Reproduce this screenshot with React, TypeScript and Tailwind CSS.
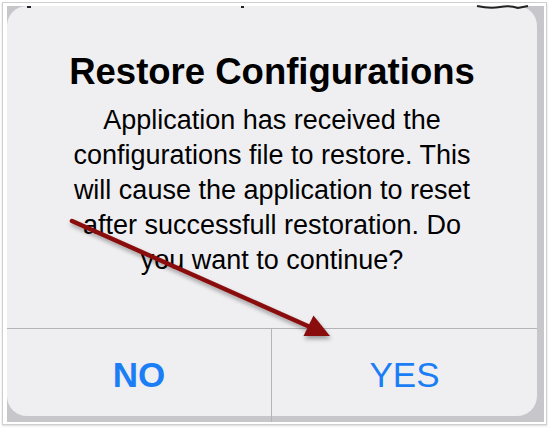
import React from "react";

const font = { fontFamily: '"Liberation Sans", Arial, Helvetica, sans-serif' };

const bodyLines = [
  "Application has received the",
  "configurations file to restore. This",
  "will cause the application to reset",
  "after successfull restoration. Do",
  "you want to continue?",
];

function Arrow() {
  return (
    <svg className="absolute inset-0 pointer-events-none" width={552} height={428} viewBox="0 0 552 428">
      <defs>
        <filter id="sh" x="-10%" y="-10%" width="120%" height="130%">
          <feDropShadow dx="1" dy="3" stdDeviation="2" floodColor="#000" floodOpacity="0.35" />
        </filter>
      </defs>
      {/* bits of the screen behind the alert */}
      <path d="M27 6 L31 6 L31 8 L27 8 Z" fill="#222" />
      <path d="M241 6 L244 6 L244 8 L241 8 Z" fill="#222" />
      <path d="M477 6 Q490 9 500 7 Q510 5 518 8 L528 6" stroke="#222" strokeWidth="2" fill="none" />
      <g filter="url(#sh)">
        <line x1="72" y1="221" x2="310" y2="327" stroke="#8a0b0b" strokeWidth="4.5" strokeLinecap="round" />
        <polygon points="330,336 303.5,336 313.5,315.5" fill="#8a0b0b" />
      </g>
    </svg>
  );
}

export default function App() {
  return (
    <div className="relative w-[552px] h-[428px] bg-white overflow-hidden" style={font}>
      <div className="ml-[2px] mt-[2px] w-[545px] h-[423px] border border-[#cfcfcf] pl-[4px] pt-[3px] pr-[2px] pb-[2px] shadow-[0_1px_2px_rgba(0,0,0,0.15)]">
        <div className="relative w-[537px] h-[416px] bg-[#c6c6cb] overflow-hidden">
          <div className="relative w-[530px] h-[410px] bg-[#efeff2] rounded-[20px] flex flex-col">
            <div className="h-[322px] flex flex-col items-center pt-[48px]">
              <h1 className="text-[36.5px] leading-[36px] font-bold text-black whitespace-nowrap">
                Restore Configurations
              </h1>
              <div className="mt-[13px] flex flex-col items-center text-[27px] leading-[35px] text-black">
                {bodyLines.map((l) => (
                  <p key={l} className="whitespace-nowrap">{l}</p>
                ))}
              </div>
            </div>
            <div className="h-px bg-[#b4b4b8]" />
            <div className="flex flex-1">
              <button className="w-[264px] flex items-center justify-center pt-[3px] text-[35px] leading-[35px] font-bold text-[#1b7ef5]">
                NO
              </button>
              <div className="w-px bg-[#b4b4b8]" />
              <button className="flex-1 flex items-center justify-center pt-[3px] text-[35px] leading-[35px] text-[#1b7ef5]">
                YES
              </button>
            </div>
          </div>
          {/* divider continues into the strip below the alert */}
          <div className="absolute left-[264px] top-[410px] w-px h-[6px] bg-[#b4b4b8]" />
        </div>
      </div>
      <Arrow />
    </div>
  );
}
